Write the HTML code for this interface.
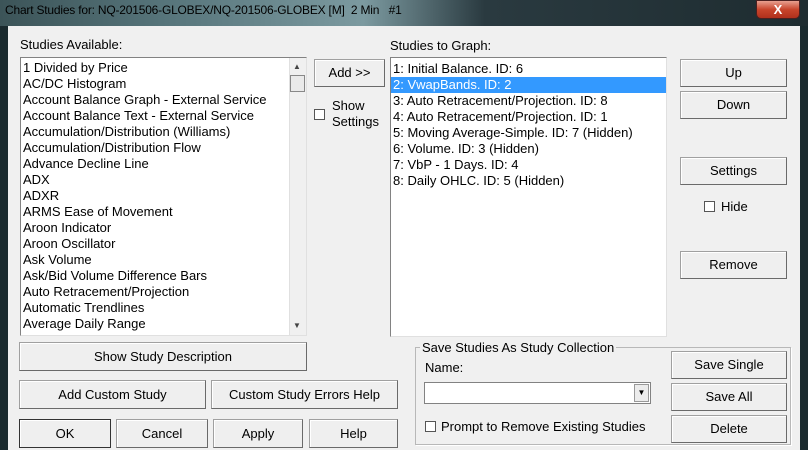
<!DOCTYPE html>
<html><head><style>
*{margin:0;padding:0;box-sizing:border-box}
body{width:808px;height:450px;overflow:hidden;position:relative;background:#1a2a2e;font-family:"Liberation Sans",Arial,sans-serif;font-size:13px;color:#000}
.t{position:absolute;left:0;top:0;width:808px;height:26px;background:linear-gradient(90deg,#3c5458 0%,#56747a 20%,#7c9aa0 45%,#2a3a40 60%,#1e2c30 100%)}
.tt{position:absolute;left:5px;top:3px;font-size:12px;color:#000;letter-spacing:-0.2px}
.x{position:absolute;left:756px;top:0;width:44px;height:19px;border:1px solid #4a2020;border-radius:0 0 5px 5px;background:linear-gradient(#e8a090,#c8452c 50%,#b0301c);color:#fff;font-weight:bold;text-align:center;font-size:13px;line-height:17px}
.b{position:absolute;left:8px;top:26px;width:792px;height:424px;background:#f0f0f0}
.a{position:absolute}
.btn{position:absolute;background:#efefef;border:1px solid #a0a0a0;border-right-color:#6a6a6a;border-bottom-color:#6a6a6a;box-shadow:inset 1px 1px 0 #fff;text-align:center;font-size:13px}
.lst{position:absolute;background:#fff;border:1px solid #828282;border-right-color:#e0e0e0;border-bottom-color:#e0e0e0;overflow:hidden}
.lst div{height:16px;line-height:16px;padding-left:2px;white-space:nowrap}
.cb{position:absolute;width:11px;height:11px;border:1px solid #555;background:#fff}
</style></head><body>
<div class="t"><div class="tt">Chart Studies for: NQ-201506-GLOBEX/NQ-201506-GLOBEX [M]&nbsp; 2 Min&nbsp;&nbsp; #1</div><div class="x">X</div></div>
<div class="b"></div>
<div class="a" style="left:20px;top:37px">Studies Available:</div>
<div class="a" style="left:390px;top:38px">Studies to Graph:</div>
<div class="lst" style="left:20px;top:57px;width:287px;height:279px;padding-top:2px">
<div>1 Divided by Price</div><div>AC/DC Histogram</div><div>Account Balance Graph - External Service</div><div>Account Balance Text - External Service</div><div>Accumulation/Distribution (Williams)</div><div>Accumulation/Distribution Flow</div><div>Advance Decline Line</div><div>ADX</div><div>ADXR</div><div>ARMS Ease of Movement</div><div>Aroon Indicator</div><div>Aroon Oscillator</div><div>Ask Volume</div><div>Ask/Bid Volume Difference Bars</div><div>Auto Retracement/Projection</div><div>Automatic Trendlines</div><div>Average Daily Range</div><div>Average True Range</div>
</div>
<div class="a" style="left:289px;top:58px;width:17px;height:277px;background:#f0f0f0;border-left:1px solid #e0e0e0"></div>
<div class="a" style="left:293px;top:62px;font-size:8px;color:#444">▲</div>
<div class="a" style="left:290px;top:75px;width:15px;height:17px;background:#eaeaea;border:1px solid #888"></div>
<div class="a" style="left:293px;top:321px;font-size:8px;color:#444">▼</div>
<div class="btn" style="left:314px;top:59px;width:71px;height:28px;line-height:26px">Add &gt;&gt;</div>
<div class="cb" style="left:314px;top:109px"></div>
<div class="a" style="left:332px;top:98px;line-height:16px">Show<br>Settings</div>
<div class="lst" style="left:390px;top:57px;width:277px;height:280px;padding-top:3px">
<div>1: Initial Balance. ID: 6</div><div style="background:#3399ff;color:#fff">2: VwapBands. ID: 2</div><div>3: Auto Retracement/Projection. ID: 8</div><div>4: Auto Retracement/Projection. ID: 1</div><div>5: Moving Average-Simple. ID: 7 (Hidden)</div><div>6: Volume. ID: 3 (Hidden)</div><div>7: VbP - 1 Days. ID: 4</div><div>8: Daily OHLC. ID: 5 (Hidden)</div>
</div>
<div class="btn" style="left:680px;top:59px;width:107px;height:28px;line-height:26px">Up</div>
<div class="btn" style="left:680px;top:91px;width:107px;height:28px;line-height:26px">Down</div>
<div class="btn" style="left:680px;top:157px;width:107px;height:28px;line-height:26px">Settings</div>
<div class="cb" style="left:704px;top:201px"></div>
<div class="a" style="left:721px;top:199px">Hide</div>
<div class="btn" style="left:680px;top:251px;width:107px;height:28px;line-height:26px">Remove</div>
<div class="btn" style="left:19px;top:342px;width:288px;height:29px;line-height:27px">Show Study Description</div>
<div class="btn" style="left:19px;top:380px;width:187px;height:29px;line-height:27px">Add Custom Study</div>
<div class="btn" style="left:211px;top:380px;width:187px;height:29px;line-height:27px">Custom Study Errors Help</div>
<div class="btn" style="left:19px;top:419px;width:92px;height:29px;line-height:27px;border:1px solid #333">OK</div>
<div class="btn" style="left:116px;top:419px;width:92px;height:29px;line-height:27px">Cancel</div>
<div class="btn" style="left:213px;top:419px;width:90px;height:29px;line-height:27px">Apply</div>
<div class="btn" style="left:309px;top:419px;width:89px;height:29px;line-height:27px">Help</div>
<div class="a" style="left:415px;top:347px;width:376px;height:98px;border:1px solid #b8b8b8;box-shadow:1px 1px 0 #fff"></div>
<div class="a" style="left:420px;top:340px;background:#f0f0f0;padding:0 2px">Save Studies As Study Collection</div>
<div class="a" style="left:425px;top:360px">Name:</div>
<div class="a" style="left:424px;top:382px;width:227px;height:22px;background:#fff;border:1px solid #828282"></div>
<div class="a" style="left:634px;top:384px;width:15px;height:18px;background:#ececec;border:1px solid #999;font-size:8px;text-align:center;line-height:16px">▼</div>
<div class="cb" style="left:425px;top:421px"></div>
<div class="a" style="left:441px;top:419px">Prompt to Remove Existing Studies</div>
<div class="btn" style="left:671px;top:351px;width:116px;height:28px;line-height:26px">Save Single</div>
<div class="btn" style="left:671px;top:383px;width:116px;height:28px;line-height:26px">Save All</div>
<div class="btn" style="left:671px;top:415px;width:116px;height:28px;line-height:26px">Delete</div>
</body></html>
